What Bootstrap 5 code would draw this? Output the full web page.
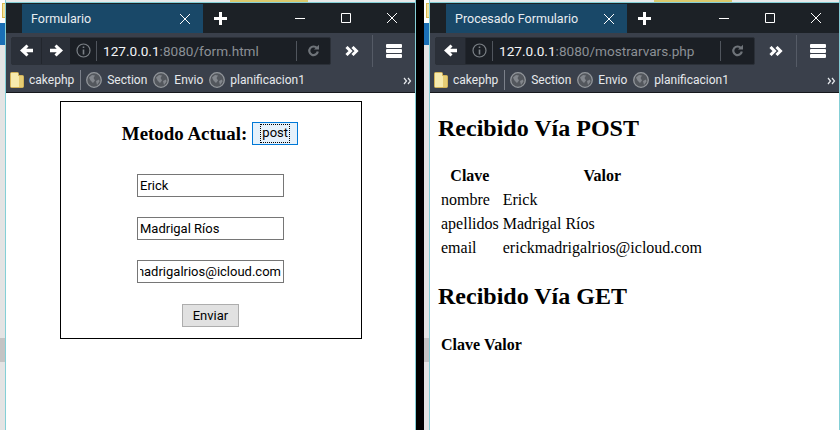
<!DOCTYPE html>
<html lang="es">
<head>
    <meta charset="UTF-8">
    <meta name="viewport" content="width=device-width, initial-scale=1.0">
    <title>Formulario</title>
    <link href="https://cdn.jsdelivr.net/npm/bootstrap@5.3.0/dist/css/bootstrap.min.css" rel="stylesheet">
    <style>
        html, body { height: 100%; }
        body { width: 840px; height: 430px; overflow: hidden; background: #000; color: #000; }

        /*------ escritorio ------*/
        .side-strip { width: 5px; height: 430px; background: #e4e4e4; flex: none; }
        .side-top { height: 23px; background: #fff; padding: 3px 0 0 2px; }
        .side-folder { height: 15px; background: #f3e29c; border: 1px solid #d9b94f; border-right: 0; }
        .side-blue { height: 22px; background: #1a6fb5; }
        .side-mid { height: 293px; }
        .side-dark { height: 24px; background: #c4c4c4; }
        .black-gap { width: 8px; background: #000; flex: none; }

        /*------ ventana ------*/
        .win { width: 411px; height: 430px; flex: none; background: #fff; overflow: hidden;
               border-left: 1px solid #84cfd6; border-right: 1px solid #84cfd6; }
        .win-top { height: 2px; background: #e8e8e8; }
        .win-top-mark { width: 78px; margin-left: 224px; height: 2px; background: #dbc96c; }
        .win-line { height: 1px; background: #84cfd6; }
        .tabstrip { height: 30px; background: #1c2126; color: #fff; font: 12.5px Roboto, sans-serif; }
        .tab-spacer { width: 16px; }
        .brow-tab { width: 181px; height: 29px; background: #194868; padding: 0 12px 0 9px; color: #e8edf1; }
        .tab-plus { margin-left: 11px; }
        .winbtn { width: 46px; height: 30px; }

        .toolbar { height: 35px; background: #3a404b; padding-left: 5px; }
        .urlbox { width: 320px; height: 28px; background: #1b1f25; border: 1px solid #2b3038; border-radius: 2px; flex: none; }
        .navbtn { height: 26px; background: #2b3039; }
        .navbtn-back { width: 30px; border-right: 1px solid #22262d; }
        .navbtn-fwd { width: 28px; }
        .url-info { width: 26px; }
        .url-sep { width: 1px; height: 20px; background: #50555d; flex: none; }
        .url-text { font: 13.6px Roboto, sans-serif; color: #8b9096; padding-left: 6px; white-space: nowrap; }
        .url-text b { font-weight: 400; color: #f2f4f6; }
        .url-reload { width: 33px; }
        .tool-over { width: 41px; }
        .tool-sep { width: 1px; height: 32px; background: #555b66; }
        .tool-menu { width: 42px; }

        .bookmarks { height: 25px; background: #3a404b; border-bottom: 1px solid #15181c; padding-left: 4px;
                     color: #e6e9ec; font: 12px Roboto, sans-serif; white-space: nowrap; }
        .bm-item { gap: 5px; margin-right: 6px; }
        .bm-sep { width: 1px; height: 20px; background: #7b808a; margin: 0 5px 0 0; }
        .bm-more { width: 12px; }

        /*------ pagina formulario ------*/
        .form-box { width: 302px; height: 238px; margin: 8px auto 0; border: 1px solid #000; padding-top: 20px; }
        .form-title { gap: 5px; margin: 0 1px 29px 0; }
        .form-title h3 { font: bold 18.9px "Liberation Serif", serif; margin: 0; }
        .btn-post { width: 46px; height: 23px; padding: 1px 7px; background: #e5f1fb; border: 1px solid #0078d7; }
        .btn-post span { height: 100%; border: 1px dotted #000; }
        .btn-post, .btn-send, .inp-text { font: 13px Roboto, sans-serif; color: #000; }
        .inp-text { width: 147px; height: 23px; border: 1px solid #767676; padding: 1px 2px; margin-bottom: 20px; border-radius: 0; outline: 0; }
        .btn-send { width: 57px; height: 23px; margin-top: 1px; background: #e1e1e1; border: 1px solid #adadad; padding: 0; }

        /*------ pagina resultado ------*/
        .result { padding: 21px 8px 0; font: 16px "Liberation Serif", serif; color: #000; }
        .result h2 { font: bold 24px/28px "Liberation Serif", serif; margin: 0 0 21px; }
        .result h2.h2-get { margin-bottom: 22px; }
        .result table { border-collapse: separate; border-spacing: 2px; margin-bottom: 21px; }
        .result th, .result td { height: 22px; padding: 1px; text-align: left; }
        .result th { font-weight: 700; text-align: center; }
    </style>
</head>
<body class="d-flex">

<svg class="d-none">
    <symbol id="ic-close" viewBox="0 0 12 12"><path d="M1 1 11 11M11 1 1 11" stroke="#fff" fill="none"/></symbol>
    <symbol id="ic-plus" viewBox="0 0 13 13"><path d="M6.5 0v13M0 6.5h13" stroke="#fff" stroke-width="3" fill="none"/></symbol>
    <symbol id="ic-min" viewBox="0 0 12 12"><path d="M1 6.5h10" stroke="#fff" fill="none"/></symbol>
    <symbol id="ic-max" viewBox="0 0 12 12"><path d="M1.5 1.5h9v9h-9z" stroke="#fff" fill="none"/></symbol>
    <symbol id="ic-back" viewBox="0 0 13 13"><path d="M6.500 .5 0 6.500 6.500 12.500 8.500 10.500 6.300 8.300H13V4.700H6.300L8.500 2.500z" fill="#fff"/></symbol>
    <symbol id="ic-fwd" viewBox="0 0 13 13"><path d="M6.500 .5 13 6.500 6.500 12.500 4.500 10.500 6.700 8.300H0V4.700H6.700L4.500 2.500z" fill="#fff"/></symbol>
    <symbol id="ic-info" viewBox="0 0 15 15"><circle cx="7.500" cy="7.500" r="6.500" fill="none" stroke="#7b8086" stroke-width="1.200"/><path d="M6.700 6.500h1.600v5H6.700zM6.700 3.500h1.600v1.600H6.700z" fill="#7b8086"/></symbol>
    <symbol id="ic-reload" viewBox="0 0 13 13"><path d="M10 4.200A4.300 4.300 0 1 0 10.800 7.500" fill="none" stroke="#6e7379" stroke-width="2.200"/><path d="M7 5.500 12 .8v4.700z" fill="#6e7379"/></symbol>
    <symbol id="ic-over" viewBox="0 0 14 10"><path d="M1.500 1 5.500 5 1.500 9M7.500 1 11.500 5 7.500 9" fill="none" stroke="#fff" stroke-width="3"/></symbol>
    <symbol id="ic-menu" viewBox="0 0 16 14"><path d="M1 0h14a1 1 0 0 1 1 1v2a1 1 0 0 1-1 1H1a1 1 0 0 1-1-1V1a1 1 0 0 1 1-1zM1 5h14a1 1 0 0 1 1 1v2a1 1 0 0 1-1 1H1a1 1 0 0 1-1-1V6a1 1 0 0 1 1-1zM1 10h14a1 1 0 0 1 1 1v2a1 1 0 0 1-1 1H1a1 1 0 0 1-1-1v-2a1 1 0 0 1 1-1z" fill="#fff"/></symbol>
    <symbol id="ic-more" viewBox="0 0 9 8"><path d="M1 1l2.500 3L1 7M5 1l2.500 3L5 7" fill="none" stroke="#e6e9ec" stroke-width="1.200"/></symbol>
    <symbol id="ic-folder" viewBox="0 0 14 16"><path d="M.5 1.500a1 1 0 0 1 1-1h6a1 1 0 0 1 1 1v2h4a1 1 0 0 1 1 1v10a1 1 0 0 1-1 1h-11a1 1 0 0 1-1-1z" fill="#f6eaae" stroke="#d2b257"/><path d="M9 4h4v11H9z" fill="#e6cd74"/></symbol>
    <symbol id="ic-globe" viewBox="0 0 16 16"><circle cx="8" cy="8" r="7.300" fill="#53575d" stroke="#92969b" stroke-width="1.300"/><path d="M3 5.500 6 3l3 .5-1.500 2.500L9 8.500 7 11 4.500 8.500zM10 9l3-1.500.5 2L11 13z" fill="#82868c"/></symbol>
</svg>

<div class="side-strip">
    <div class="side-top"><div class="side-folder"></div></div>
    <div class="side-blue"></div>
    <div class="side-mid"></div>
    <div class="side-dark"></div>
</div>

<!-- ventana formulario -->
<div class="win">
    <div class="win-top"><div class="win-top-mark"></div></div>
    <div class="win-line"></div>
    <div class="tabstrip d-flex align-items-end">
        <div class="tab-spacer"></div>
        <div class="brow-tab d-flex align-items-center justify-content-between">
            <span>Formulario</span>
            <svg width="12" height="12"><use href="#ic-close"/></svg>
        </div>
        <svg class="tab-plus align-self-center" width="13" height="13"><use href="#ic-plus"/></svg>
        <div class="d-flex ms-auto">
            <div class="winbtn d-flex align-items-center justify-content-center"><svg width="12" height="12"><use href="#ic-min"/></svg></div>
            <div class="winbtn d-flex align-items-center justify-content-center"><svg width="12" height="12"><use href="#ic-max"/></svg></div>
            <div class="winbtn d-flex align-items-center justify-content-center"><svg width="12" height="12"><use href="#ic-close"/></svg></div>
        </div>
    </div>
    <div class="toolbar d-flex align-items-center">
        <div class="urlbox d-flex align-items-center">
            <div class="navbtn navbtn-back d-flex align-items-center justify-content-center"><svg width="13" height="13"><use href="#ic-back"/></svg></div>
            <div class="navbtn navbtn-fwd d-flex align-items-center justify-content-center"><svg width="13" height="13"><use href="#ic-fwd"/></svg></div>
            <div class="url-info d-flex justify-content-center"><svg width="15" height="15"><use href="#ic-info"/></svg></div>
            <div class="url-sep"></div>
            <div class="url-text flex-grow-1"><b>127.0.0.1</b>:8080/form.html</div>
            <div class="url-sep"></div>
            <div class="url-reload d-flex justify-content-center"><svg width="13" height="13"><use href="#ic-reload"/></svg></div>
        </div>
        <div class="tool-over d-flex justify-content-center"><svg width="14" height="10"><use href="#ic-over"/></svg></div>
        <div class="tool-sep"></div>
        <div class="tool-menu d-flex justify-content-center"><svg width="16" height="14"><use href="#ic-menu"/></svg></div>
    </div>
    <div class="bookmarks d-flex align-items-center">
        <div class="bm-item d-flex align-items-center"><svg width="14" height="16"><use href="#ic-folder"/></svg>cakephp</div>
        <div class="bm-sep"></div>
        <div class="bm-item d-flex align-items-center"><svg width="16" height="16"><use href="#ic-globe"/></svg>Section</div>
        <div class="bm-item d-flex align-items-center"><svg width="16" height="16"><use href="#ic-globe"/></svg>Envio</div>
        <div class="bm-item d-flex align-items-center"><svg width="16" height="16"><use href="#ic-globe"/></svg>planificacion1</div>
        <div class="bm-more ms-auto"><svg width="9" height="8"><use href="#ic-more"/></svg></div>
    </div>
    <div class="form-box d-flex flex-column align-items-center">
        <div class="form-title d-flex align-items-center">
            <h3>Metodo Actual:</h3>
            <button type="button" class="btn-post"><span class="d-block">post</span></button>
        </div>
        <input class="inp-text" type="text" value="Erick">
        <input class="inp-text" type="text" value="Madrigal Ríos">
        <input class="inp-text" type="text" dir="rtl" value="erickmadrigalrios@icloud.com">
        <button type="button" class="btn-send">Enviar</button>
    </div>
</div>

<div class="black-gap"></div>

<div class="side-strip">
    <div class="side-top"><div class="side-folder"></div></div>
    <div class="side-blue"></div>
    <div class="side-mid"></div>
    <div class="side-dark"></div>
</div>

<!-- ventana resultado -->
<div class="win">
    <div class="win-top"><div class="win-top-mark"></div></div>
    <div class="win-line"></div>
    <div class="tabstrip d-flex align-items-end">
        <div class="tab-spacer"></div>
        <div class="brow-tab d-flex align-items-center justify-content-between">
            <span>Procesado Formulario</span>
            <svg width="12" height="12"><use href="#ic-close"/></svg>
        </div>
        <svg class="tab-plus align-self-center" width="13" height="13"><use href="#ic-plus"/></svg>
        <div class="d-flex ms-auto">
            <div class="winbtn d-flex align-items-center justify-content-center"><svg width="12" height="12"><use href="#ic-min"/></svg></div>
            <div class="winbtn d-flex align-items-center justify-content-center"><svg width="12" height="12"><use href="#ic-max"/></svg></div>
            <div class="winbtn d-flex align-items-center justify-content-center"><svg width="12" height="12"><use href="#ic-close"/></svg></div>
        </div>
    </div>
    <div class="toolbar d-flex align-items-center">
        <div class="urlbox d-flex align-items-center">
            <div class="navbtn navbtn-back d-flex align-items-center justify-content-center"><svg width="13" height="13"><use href="#ic-back"/></svg></div>
            <div class="url-info d-flex justify-content-center"><svg width="15" height="15"><use href="#ic-info"/></svg></div>
            <div class="url-sep"></div>
            <div class="url-text flex-grow-1"><b>127.0.0.1</b>:8080/mostrarvars.php</div>
            <div class="url-sep"></div>
            <div class="url-reload d-flex justify-content-center"><svg width="13" height="13"><use href="#ic-reload"/></svg></div>
        </div>
        <div class="tool-over d-flex justify-content-center"><svg width="14" height="10"><use href="#ic-over"/></svg></div>
        <div class="tool-sep"></div>
        <div class="tool-menu d-flex justify-content-center"><svg width="16" height="14"><use href="#ic-menu"/></svg></div>
    </div>
    <div class="bookmarks d-flex align-items-center">
        <div class="bm-item d-flex align-items-center"><svg width="14" height="16"><use href="#ic-folder"/></svg>cakephp</div>
        <div class="bm-sep"></div>
        <div class="bm-item d-flex align-items-center"><svg width="16" height="16"><use href="#ic-globe"/></svg>Section</div>
        <div class="bm-item d-flex align-items-center"><svg width="16" height="16"><use href="#ic-globe"/></svg>Envio</div>
        <div class="bm-item d-flex align-items-center"><svg width="16" height="16"><use href="#ic-globe"/></svg>planificacion1</div>
        <div class="bm-more ms-auto"><svg width="9" height="8"><use href="#ic-more"/></svg></div>
    </div>
    <div class="result">
        <h2>Recibido Vía POST</h2>
        <table>
            <thead><tr><th>Clave</th><th>Valor</th></tr></thead>
            <tbody>
                <tr><td>nombre</td><td>Erick</td></tr>
                <tr><td>apellidos</td><td>Madrigal Ríos</td></tr>
                <tr><td>email</td><td>erickmadrigalrios@icloud.com</td></tr>
            </tbody>
        </table>
        <h2 class="h2-get">Recibido Vía GET</h2>
        <table>
            <thead><tr><th>Clave</th><th>Valor</th></tr></thead>
        </table>
    </div>
</div>

<script src="https://cdn.jsdelivr.net/npm/bootstrap@5.3.0/dist/js/bootstrap.bundle.min.js"></script>
</body>
</html>
